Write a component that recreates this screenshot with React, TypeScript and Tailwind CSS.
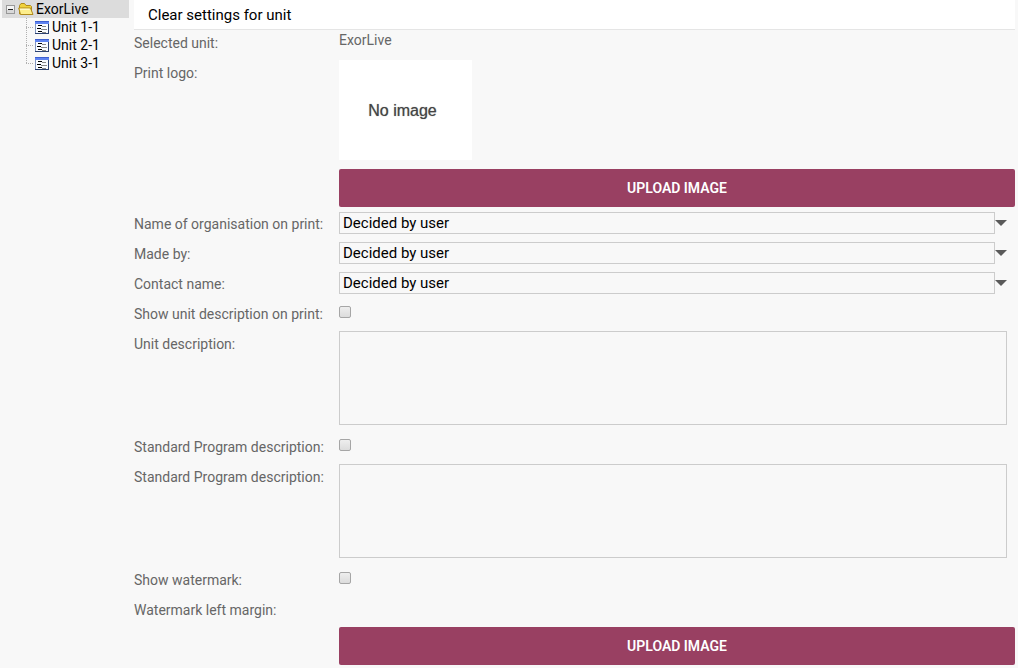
import { useId, type ReactNode } from 'react'

const units = ['Unit 1-1', 'Unit 2-1', 'Unit 3-1']

function FolderIcon() {
  return (
    <svg width="16" height="14" viewBox="0 0 16 14" className="shrink-0">
      <path d="M1.500 12V3.500l1.500-2h3.500l1.500 2h4.500l1 1V12z" fill="#f0d23c" stroke="#b08a1c" />
      <path d="M0.700 6h11.800l2.500 6.500H2.500z" fill="#fdee8c" stroke="#b08a1c" strokeLinejoin="round" />
      <path d="M2 7.200h9.700" stroke="#fffde0" />
    </svg>
  )
}

function UnitIcon() {
  return (
    <svg width="14" height="13" viewBox="0 0 14 13" shapeRendering="crispEdges" className="shrink-0">
      <path d="M0 0h14v13H0z" fill="#8296c0" />
      <path d="M1 3h12v9H1z" fill="#fafcff" />
      <path d="M0 0h14v1H0z" fill="#3d5fd0" />
      <path d="M0 1h14v2H0z" fill="#5f83f0" />
      <path d="M13 3h1v10H0v-1h13z" fill="#2c4270" />
      <path d="M3 4h4v1H3zM2 7h4v1H2zM3 10h4v1H3z" fill="#000" />
      <path d="M7 5h4v1H7zM6 8h6v1H6zM7 11h4v1H7z" fill="#888" />
    </svg>
  )
}

function ToggleIcon() {
  return (
    <svg width="9" height="9" viewBox="0 0 9 9" shapeRendering="crispEdges">
      <path d="M0.500 0.500h8v8h-8z" fill="#f3f3f3" stroke="#999" />
      <path d="M1 5h7v3H1z" fill="#d8d8d8" />
      <path d="M2 4h5v1H2z" fill="#222" />
    </svg>
  )
}

function TreeLine({ last }: { last: boolean }) {
  return (
    <svg width="9" height="18" viewBox="0 0 9 18" shapeRendering="crispEdges" className="shrink-0">
      <path d={last ? 'M0.500 0v10' : 'M0.500 0v18'} stroke="#b0b0b0" strokeDasharray="1 1" />
      <path d="M0 9.500h8" stroke="#b0b0b0" strokeDasharray="1 1" />
    </svg>
  )
}

function UnitTree() {
  return (
    <nav className="ml-0.5 w-[127px] shrink-0 text-black">
      <div className="flex h-[18px] items-center bg-[#dcdcdc] pl-1">
        <button type="button" aria-label="Collapse">
          <ToggleIcon />
        </button>
        <button type="button" className="ml-[3px] flex items-center gap-0.5">
          <FolderIcon />
          ExorLive
        </button>
      </div>
      <ul>
        {units.map((unit, i) => (
          <li key={unit} className="flex h-[18px] items-center pl-6">
            <TreeLine last={i === units.length - 1} />
            <button type="button" className="flex items-center gap-[3px]">
              <UnitIcon />
              {unit}
            </button>
          </li>
        ))}
      </ul>
    </nav>
  )
}

function Row({ label, htmlFor, children }: { label?: string; htmlFor?: string; children?: ReactNode }) {
  return (
    <div className="grid min-h-[30px] grid-cols-[205px_1fr]">
      <div className="pt-[3px]">{label && <label htmlFor={htmlFor}>{label}</label>}</div>
      <div>{children}</div>
    </div>
  )
}

function SelectRow({ label }: { label: string }) {
  const id = useId()
  return (
    <Row label={label} htmlFor={id}>
      <div className="mt-px mr-2 flex items-center">
        <select
          id={id}
          className="h-[22px] min-w-0 flex-1 appearance-none border border-[#ccc] bg-transparent px-[3px] text-[15px] leading-5 text-black"
        >
          <option>Decided by user</option>
        </select>
        <svg width="12" height="6" viewBox="0 0 12 6" className="shrink-0">
          <path d="M0 0h12L6 6z" fill="#5a5a5a" />
        </svg>
      </div>
    </Row>
  )
}

function CheckRow({ label }: { label: string }) {
  const id = useId()
  return (
    <Row label={label} htmlFor={id}>
      <input
        id={id}
        type="checkbox"
        className="mt-[5px] block size-3 appearance-none rounded-xs border border-[#a6a6a6] bg-linear-to-b from-[#eee] to-[#dcdcdc]"
      />
    </Row>
  )
}

function TextRow({ label }: { label: string }) {
  const id = useId()
  return (
    <Row label={label} htmlFor={id}>
      <div className="pr-2 pb-[9px]">
        <textarea id={id} className="block h-[94px] w-full resize-none border border-[#ccc] bg-transparent p-1" />
      </div>
    </Row>
  )
}

function UploadButton() {
  return (
    <button type="button" className="h-[38px] w-full rounded-xs bg-[#994062] font-semibold text-white">
      UPLOAD IMAGE
    </button>
  )
}

export default function App() {
  return (
    <div className="flex min-h-screen bg-[#f8f8f8] font-['Roboto',sans-serif] text-sm leading-5 text-[#666]">
      <UnitTree />
      <main className="mr-[3px] ml-[5px] min-w-0 flex-1">
        <header className="flex h-[30px] items-center border-b border-[#e5e5e5] bg-white pl-3.5 text-[15px] text-black">
          <button type="button">Clear settings for unit</button>
        </header>
        <form>
          <Row label="Selected unit:">ExorLive</Row>
          <Row label="Print logo:">
            <div className="flex h-[100px] w-[133px] items-center justify-center bg-white pt-0.5 pr-1.5 font-['Liberation_Sans',sans-serif] text-base text-[#444] text-shadow-[0_0_1px_#888]">
              No image
            </div>
            <div className="pt-[9px] pb-1">
              <UploadButton />
            </div>
          </Row>
          <SelectRow label="Name of organisation on print:" />
          <SelectRow label="Made by:" />
          <SelectRow label="Contact name:" />
          <CheckRow label="Show unit description on print:" />
          <TextRow label="Unit description:" />
          <CheckRow label="Standard Program description:" />
          <TextRow label="Standard Program description:" />
          <CheckRow label="Show watermark:" />
          <Row label="Watermark left margin:" />
          <Row>
            <UploadButton />
          </Row>
        </form>
      </main>
    </div>
  )
}
